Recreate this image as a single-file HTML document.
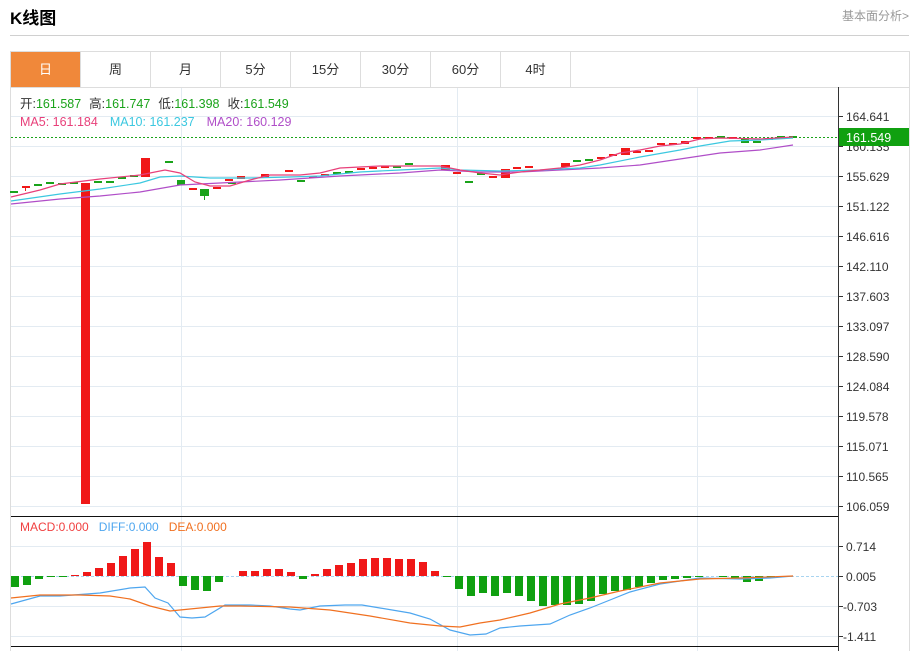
<!DOCTYPE html>
<html><head><meta charset="utf-8"><style>
*{margin:0;padding:0;box-sizing:border-box}
body{width:919px;height:651px;background:#fff;font-family:"Liberation Sans","Noto Sans CJK SC",sans-serif;position:relative;overflow:hidden}
.t{position:absolute;left:10px;top:4px;font-size:17px;font-weight:bold;color:#000}
.lk{position:absolute;right:10px;top:7px;font-size:12px;color:#999}
.hl{position:absolute;left:10px;top:35px;width:899px;height:1px;background:#d0d0d0}
.tabs{position:absolute;left:10px;top:51px;width:900px;height:37px;border:1px solid #ddd;border-bottom:none}
.tab{position:absolute;top:0;width:70px;height:36px;line-height:36px;text-align:center;font-size:13px;color:#333;border-right:1px solid #ddd}
.on{background:#f0883a;color:#fff}
.sv{position:absolute;left:0;top:0}
</style></head><body>
<div class="t">K线图</div>
<div class="lk">基本面分析&gt;</div>
<div class="hl"></div>
<div class="tabs">
<div class="tab on" style="left:0">日</div><div class="tab" style="left:70px">周</div><div class="tab" style="left:140px">月</div><div class="tab" style="left:210px">5分</div><div class="tab" style="left:280px">15分</div><div class="tab" style="left:350px">30分</div><div class="tab" style="left:420px">60分</div><div class="tab" style="left:490px">4时</div>
</div>
<svg class="sv" width="919" height="651" font-family="Liberation Sans, Noto Sans CJK SC, sans-serif">
<rect x="10" y="87" width="900" height="1" fill="#ddd"/>
<rect x="10" y="87" width="1" height="564" fill="#ddd"/>
<rect x="909" y="87" width="1" height="564" fill="#ddd"/>
<g stroke="#e3ebf2" stroke-width="1">
<line x1="11" y1="116.5" x2="838" y2="116.5"/><line x1="11" y1="146.5" x2="838" y2="146.5"/><line x1="11" y1="176.5" x2="838" y2="176.5"/><line x1="11" y1="206.5" x2="838" y2="206.5"/><line x1="11" y1="236.5" x2="838" y2="236.5"/><line x1="11" y1="266.5" x2="838" y2="266.5"/><line x1="11" y1="296.5" x2="838" y2="296.5"/><line x1="11" y1="326.5" x2="838" y2="326.5"/><line x1="11" y1="356.5" x2="838" y2="356.5"/><line x1="11" y1="386.5" x2="838" y2="386.5"/><line x1="11" y1="416.5" x2="838" y2="416.5"/><line x1="11" y1="446.5" x2="838" y2="446.5"/><line x1="11" y1="476.5" x2="838" y2="476.5"/><line x1="11" y1="506.5" x2="838" y2="506.5"/>
<line x1="11" y1="546.5" x2="838" y2="546.5"/><line x1="11" y1="606.5" x2="838" y2="606.5"/><line x1="11" y1="636.5" x2="838" y2="636.5"/>
<line x1="181.5" y1="88" x2="181.5" y2="651"/><line x1="457.5" y1="88" x2="457.5" y2="651"/><line x1="697.5" y1="88" x2="697.5" y2="651"/>
</g>
<text x="20" y="108" font-size="12.5" fill="#333">开:<tspan fill="#1aa31a">161.587</tspan><tspan dx="8">高:</tspan><tspan fill="#1aa31a">161.747</tspan><tspan dx="8">低:</tspan><tspan fill="#1aa31a">161.398</tspan><tspan dx="8">收:</tspan><tspan fill="#1aa31a">161.549</tspan></text>
<text x="20" y="126" font-size="12.5" fill="#e8407a">MA5: 161.184<tspan dx="12" fill="#3cc8e0">MA10: 161.237</tspan><tspan dx="12" fill="#b04ec8">MA20: 160.129</tspan></text>
<line x1="11" y1="137.5" x2="838" y2="137.5" stroke="#1aa31a" stroke-dasharray="2,2"/>
<g fill="#1aa31a">
<rect x="10" y="191" width="8" height="2"/><rect x="34" y="184" width="8" height="2"/><rect x="46" y="182" width="8" height="2"/><rect x="58" y="183" width="8" height="2"/><rect x="70" y="182" width="8" height="2"/><rect x="94" y="181" width="8" height="2"/><rect x="106" y="181" width="8" height="2"/><rect x="118" y="177" width="8" height="2"/><rect x="130" y="175" width="8" height="2"/><rect x="165" y="161" width="8" height="2"/><rect x="177" y="180" width="8" height="5"/><rect x="200" y="189" width="9" height="7"/><rect x="204" y="189" width="1" height="11"/><rect x="228" y="182" width="8" height="2"/><rect x="297" y="180" width="8" height="2"/><rect x="333" y="172" width="8" height="2"/><rect x="345" y="171" width="8" height="2"/><rect x="393" y="166" width="8" height="2"/><rect x="405" y="163" width="8" height="2"/><rect x="465" y="181" width="8" height="2"/><rect x="477" y="173" width="8" height="2"/><rect x="573" y="160" width="8" height="2"/><rect x="585" y="159" width="8" height="2"/><rect x="717" y="136" width="8" height="2"/><rect x="741" y="139" width="8" height="4"/><rect x="753" y="141" width="8" height="2"/><rect x="777" y="136" width="8" height="2"/><rect x="789" y="136" width="8" height="2"/>
</g>
<g fill="#f01818">
<rect x="22" y="186" width="8" height="2"/><rect x="25" y="186" width="1" height="5"/><rect x="81" y="183" width="9" height="321"/><rect x="141" y="158" width="9" height="19"/><rect x="189" y="188" width="8" height="2"/><rect x="213" y="187" width="8" height="2"/><rect x="225" y="179" width="8" height="2"/><rect x="237" y="176" width="8" height="3"/><rect x="261" y="174" width="8" height="3"/><rect x="285" y="170" width="8" height="2"/><rect x="309" y="176" width="8" height="2"/><rect x="321" y="174" width="8" height="2"/><rect x="357" y="168" width="8" height="2"/><rect x="369" y="167" width="8" height="2"/><rect x="381" y="166" width="8" height="2"/><rect x="441" y="165" width="9" height="5"/><rect x="453" y="172" width="8" height="2"/><rect x="489" y="176" width="8" height="2"/><rect x="501" y="169" width="9" height="9"/><rect x="513" y="167" width="8" height="2"/><rect x="525" y="166" width="8" height="2"/><rect x="561" y="163" width="9" height="4"/><rect x="597" y="157" width="8" height="2"/><rect x="609" y="154" width="8" height="2"/><rect x="621" y="148" width="9" height="7"/><rect x="633" y="151" width="8" height="2"/><rect x="645" y="150" width="8" height="2"/><rect x="657" y="143" width="8" height="2"/><rect x="669" y="143" width="8" height="2"/><rect x="681" y="141" width="8" height="3"/><rect x="693" y="137" width="8" height="2"/><rect x="705" y="137" width="8" height="2"/><rect x="729" y="137" width="8" height="2"/><rect x="765" y="138" width="8" height="2"/>
</g>
<g fill="none" stroke-width="1.2">
<polyline stroke="#b04ec8" points="11,204 60,199 100,196 140,192 180,185 220,183 280,180 340,176 400,173 440,170 480,172 520,172 560,170 600,168 640,165 680,159 720,153 760,150 793,145"/>
<polyline stroke="#3cc8e0" points="11,201 60,194 100,189 140,183 160,177 180,176 210,178 250,178 290,177 320,176 360,172 400,170 440,168 460,170 500,171 540,170 580,168 600,165 640,157 680,150 700,146 730,141 760,140 793,138"/>
<polyline stroke="#e8407a" points="11,197 40,190 60,184 100,179 140,175 165,170 180,173 195,182 210,186 230,186 250,180 270,175 300,175 320,173 340,168 380,166 440,166 460,170 480,173 500,175 520,172 540,170 560,168 580,165 600,160 620,153 640,150 660,146 680,144 700,139 720,138 760,139 793,137"/>
</g>
<rect x="838" y="87" width="1" height="564" fill="#333"/>
<rect x="11" y="516" width="827" height="1" fill="#111"/>
<rect x="11" y="646" width="827" height="1" fill="#111"/>
<g font-size="12" fill="#333">
<g stroke="#333"><line x1="838" y1="116.5" x2="843" y2="116.5"/><line x1="838" y1="146.5" x2="843" y2="146.5"/><line x1="838" y1="176.5" x2="843" y2="176.5"/><line x1="838" y1="206.5" x2="843" y2="206.5"/><line x1="838" y1="236.5" x2="843" y2="236.5"/><line x1="838" y1="266.5" x2="843" y2="266.5"/><line x1="838" y1="296.5" x2="843" y2="296.5"/><line x1="838" y1="326.5" x2="843" y2="326.5"/><line x1="838" y1="356.5" x2="843" y2="356.5"/><line x1="838" y1="386.5" x2="843" y2="386.5"/><line x1="838" y1="416.5" x2="843" y2="416.5"/><line x1="838" y1="446.5" x2="843" y2="446.5"/><line x1="838" y1="476.5" x2="843" y2="476.5"/><line x1="838" y1="506.5" x2="843" y2="506.5"/><line x1="838" y1="546.5" x2="843" y2="546.5"/><line x1="838" y1="576.5" x2="843" y2="576.5"/><line x1="838" y1="606.5" x2="843" y2="606.5"/><line x1="838" y1="636.5" x2="843" y2="636.5"/></g>
<text x="846" y="121">164.641</text><text x="846" y="151">160.135</text><text x="846" y="181">155.629</text><text x="846" y="211">151.122</text><text x="846" y="241">146.616</text><text x="846" y="271">142.110</text><text x="846" y="301">137.603</text><text x="846" y="331">133.097</text><text x="846" y="361">128.590</text><text x="846" y="391">124.084</text><text x="846" y="421">119.578</text><text x="846" y="451">115.071</text><text x="846" y="481">110.565</text><text x="846" y="511">106.059</text>
<text x="846" y="551">0.714</text><text x="846" y="581">0.005</text><text x="843" y="611">-0.703</text><text x="843" y="641">-1.411</text>
</g>
<rect x="839" y="128" width="70" height="18" fill="#10a010"/>
<text x="846" y="142" font-size="12.5" fill="#fff">161.549</text>
<text x="20" y="531" font-size="12" fill="#f04040">MACD:0.000<tspan dx="10" fill="#4ea6ef">DIFF:0.000</tspan><tspan dx="10" fill="#f07020">DEA:0.000</tspan></text>
<line x1="11" y1="576.5" x2="838" y2="576.5" stroke="#a8d4f0" stroke-dasharray="3,2"/>
<g fill="#f01818">
<rect x="71" y="575" width="8" height="1"/><rect x="83" y="572" width="8" height="4"/><rect x="95" y="568" width="8" height="8"/><rect x="107" y="563" width="8" height="13"/><rect x="119" y="556" width="8" height="20"/><rect x="131" y="549" width="8" height="27"/><rect x="143" y="542" width="8" height="34"/><rect x="155" y="557" width="8" height="19"/><rect x="167" y="563" width="8" height="13"/>
<rect x="239" y="571" width="8" height="5"/><rect x="251" y="571" width="8" height="5"/><rect x="263" y="569" width="8" height="7"/><rect x="275" y="569" width="8" height="7"/><rect x="287" y="572" width="8" height="4"/><rect x="311" y="574" width="8" height="2"/><rect x="323" y="569" width="8" height="7"/><rect x="335" y="565" width="8" height="11"/><rect x="347" y="563" width="8" height="13"/><rect x="359" y="559" width="8" height="17"/><rect x="371" y="558" width="8" height="18"/><rect x="383" y="558" width="8" height="18"/><rect x="395" y="559" width="8" height="17"/><rect x="407" y="559" width="8" height="17"/><rect x="419" y="562" width="8" height="14"/><rect x="431" y="571" width="8" height="5"/>
</g>
<g fill="#10a010">
<rect x="11" y="576" width="8" height="11"/><rect x="23" y="576" width="8" height="9"/><rect x="35" y="576" width="8" height="3"/><rect x="47" y="576" width="8" height="1"/><rect x="59" y="576" width="8" height="1"/>
<rect x="179" y="576" width="8" height="10"/><rect x="191" y="576" width="8" height="14"/><rect x="203" y="576" width="8" height="15"/><rect x="215" y="576" width="8" height="6"/><rect x="299" y="576" width="8" height="3"/><rect x="443" y="576" width="8" height="1"/>
<rect x="455" y="576" width="8" height="13"/><rect x="467" y="576" width="8" height="20"/><rect x="479" y="576" width="8" height="17"/><rect x="491" y="576" width="8" height="20"/><rect x="503" y="576" width="8" height="17"/><rect x="515" y="576" width="8" height="20"/><rect x="527" y="576" width="8" height="25"/><rect x="539" y="576" width="8" height="30"/><rect x="551" y="576" width="8" height="29"/><rect x="563" y="576" width="8" height="29"/><rect x="575" y="576" width="8" height="28"/><rect x="587" y="576" width="8" height="25"/><rect x="599" y="576" width="8" height="18"/><rect x="611" y="576" width="8" height="15"/><rect x="623" y="576" width="8" height="14"/><rect x="635" y="576" width="8" height="11"/><rect x="647" y="576" width="8" height="7"/><rect x="659" y="576" width="8" height="4"/><rect x="671" y="576" width="8" height="3"/><rect x="683" y="576" width="8" height="2"/><rect x="695" y="576" width="8" height="1"/><rect x="719" y="576" width="8" height="1"/><rect x="731" y="576" width="8" height="2"/><rect x="743" y="576" width="8" height="6"/><rect x="755" y="576" width="8" height="5"/><rect x="767" y="576" width="8" height="1"/>
</g>
<g fill="none" stroke-width="1.2">
<polyline stroke="#4ea6ef" points="11,604 40,596 60,596 100,593 130,588 145,587 155,598 168,603 180,617 192,618 205,617 225,605 250,605 270,606 290,609 300,610 320,606 345,605 362,605 380,608 410,613 430,619 450,630 470,635 486,634 500,628 520,626 550,624 570,615 590,608 610,600 630,592 660,584 700,578 740,579 770,578 793,576"/>
<polyline stroke="#f07020" points="11,598 40,595 80,595 110,596 130,599 150,606 170,611 190,609 220,606 240,606 290,607 330,610 370,616 410,623 440,626 460,627 480,623 500,620 530,613 560,604 590,598 620,591 660,583 700,579 740,578 793,576"/>
</g>
</svg>
</body></html>
